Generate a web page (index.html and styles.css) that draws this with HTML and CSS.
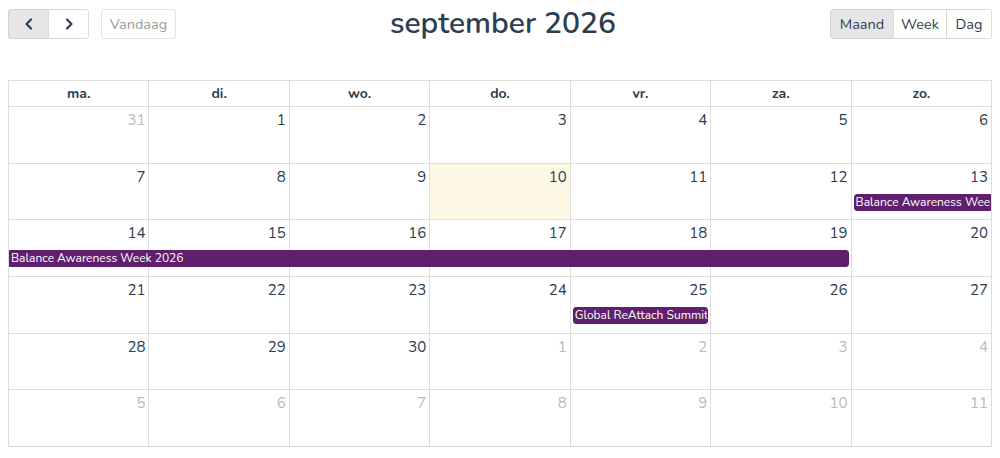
FILE: index.html
```html
<!DOCTYPE html>
<html lang="nl">
<head>
<meta charset="utf-8">
<title>september 2026</title>
<link rel="stylesheet" href="styles.css">
</head>
<body>
<div class="cal">
  <div class="toolbar">
    <div class="tb-left">
      <div class="btn-group">
        <button class="btn btn-icon active" aria-label="vorige"><svg width="14" height="14" viewBox="0 0 14 14"><path d="M9 2.5 4.5 7 9 11.5" fill="none" stroke="#2c3e50" stroke-width="2.2" stroke-linecap="round" stroke-linejoin="round"/></svg></button>
        <button class="btn btn-icon" aria-label="volgende"><svg width="14" height="14" viewBox="0 0 14 14"><path d="M5 2.5 9.5 7 5 11.5" fill="none" stroke="#2c3e50" stroke-width="2.2" stroke-linecap="round" stroke-linejoin="round"/></svg></button>
      </div>
      <button class="btn btn-disabled">Vandaag</button>
    </div>
    <h2 class="title">september 2026</h2>
    <div class="btn-group">
      <button class="btn active b-maand">Maand</button>
      <button class="btn b-week">Week</button>
      <button class="btn b-dag">Dag</button>
    </div>
  </div>

  <div class="grid">
    <div class="head">
      <div class="hcell">ma.</div><div class="hcell">di.</div><div class="hcell">wo.</div><div class="hcell">do.</div><div class="hcell">vr.</div><div class="hcell">za.</div><div class="hcell">zo.</div>
    </div>
    <div class="body">
      <div class="week">
        <div class="day other">31</div><div class="day">1</div><div class="day">2</div><div class="day">3</div><div class="day">4</div><div class="day">5</div><div class="day">6</div>
      </div>
      <div class="week">
        <div class="day">7</div><div class="day">8</div><div class="day">9</div><div class="day today">10</div><div class="day">11</div><div class="day">12</div><div class="day">13</div>
        <div class="event ev-start c7">Balance Awareness Week 2026</div>
      </div>
      <div class="week">
        <div class="day">14</div><div class="day">15</div><div class="day">16</div><div class="day">17</div><div class="day">18</div><div class="day">19</div><div class="day">20</div>
        <div class="event ev-end c1-6">Balance Awareness Week 2026</div>
      </div>
      <div class="week">
        <div class="day">21</div><div class="day">22</div><div class="day">23</div><div class="day">24</div><div class="day">25</div><div class="day">26</div><div class="day">27</div>
        <div class="event c5">Global ReAttach Summit</div>
      </div>
      <div class="week">
        <div class="day">28</div><div class="day">29</div><div class="day">30</div><div class="day other">1</div><div class="day other">2</div><div class="day other">3</div><div class="day other">4</div>
      </div>
      <div class="week">
        <div class="day other">5</div><div class="day other">6</div><div class="day other">7</div><div class="day other">8</div><div class="day other">9</div><div class="day other">10</div><div class="day other">11</div>
      </div>
    </div>
  </div>
</div>
</body>
</html>
```
FILE: styles.css
```css
* { box-sizing: border-box; }
html, body { margin: 0; background: #fff; }
body {
  padding: 8px;
  font-family: "Nunito", "Lato", "Open Sans", sans-serif;
  color: #2c3e50;
}
.cal { width: 984px; }
.toolbar {
  display: flex;
  align-items: center;
  justify-content: space-between;
  height: 31px;
}
.tb-left { display: flex; align-items: center; gap: 12px; }
.btn-group { display: flex; }
.btn {
  height: 30px;
  padding: 0 8px;
  border: 1px solid #dcdcdc;
  background: #fff;
  color: #2c3e50;
  font-family: inherit;
  font-size: 14.5px;
  border-radius: 0;
  display: flex;
  align-items: center;
  justify-content: center;
  box-shadow: none;
}
.btn-group .btn + .btn { margin-left: -1px; }
.btn-group .btn:first-child { border-radius: 3px 0 0 3px; }
.btn-group .btn:last-child { border-radius: 0 3px 3px 0; }
.btn.active { background: #e6e6e6; border-color: #d0d0d0; }
.btn-icon { width: 41px; padding: 0; }
.btn-disabled { border-radius: 3px; color: #999; border-color: #e2e2e2; width: 75px; }
.b-maand { width: 64px; }
.b-week { width: 54px; }
.b-dag { width: 46px; }
.title {
  margin: 0;
  font-size: 30px;
  font-weight: 600;
  color: #2c3e50;
  letter-spacing: 0;
  padding-left: 0;
}
.grid {
  margin-top: 41px;
  border: 1px solid #ddd;
  border-right: 0;
  border-bottom: 0;
}
.head {
  display: grid;
  grid-template-columns: repeat(7, 1fr);
  height: 26px;
}
.hcell {
  border-right: 1px solid #ddd;
  border-bottom: 1px solid #ddd;
  text-align: center;
  font-weight: 700;
  font-size: 14px;
  line-height: 25px;
  color: #2c3e50;
}
.body {
  display: grid;
  grid-template-rows: repeat(6, 1fr);
  height: 340px;
}
.week {
  display: grid;
  grid-template-columns: repeat(7, 1fr);
  grid-template-rows: 30px 17px 1fr;
}
.day {
  grid-row: 1 / 4;
  border-right: 1px solid #ddd;
  border-bottom: 1px solid #ddd;
  text-align: right;
  padding: 3px 3px 0 0;
  font-size: 15px;
  line-height: 20px;
  color: #2c3e50;
}
.day:nth-child(1) { grid-column: 1; }
.day:nth-child(2) { grid-column: 2; }
.day:nth-child(3) { grid-column: 3; }
.day:nth-child(4) { grid-column: 4; }
.day:nth-child(5) { grid-column: 5; }
.day:nth-child(6) { grid-column: 6; }
.day:nth-child(7) { grid-column: 7; }
.day.other { color: #bbb; }
.day.today { background: #fcf8e3; }
.event {
  grid-row: 2;
  z-index: 1;
  background: #5f1f6e;
  border: 1px solid #5f1f6e;
  color: #fff;
  font-size: 12px;
  line-height: 15px;
  padding-left: 1px;
  white-space: nowrap;
  overflow: hidden;
  border-radius: 3px;
  margin: 0 3px 0 2px;
}
.event.ev-start { border-radius: 3px 0 0 3px; margin-right: 1px; }
.event.ev-end { border-radius: 0 3px 3px 0; margin-left: 0; }
.c7 { grid-column: 7; }
.c1-6 { grid-column: 1 / 7; }
.c5 { grid-column: 5; }
```
